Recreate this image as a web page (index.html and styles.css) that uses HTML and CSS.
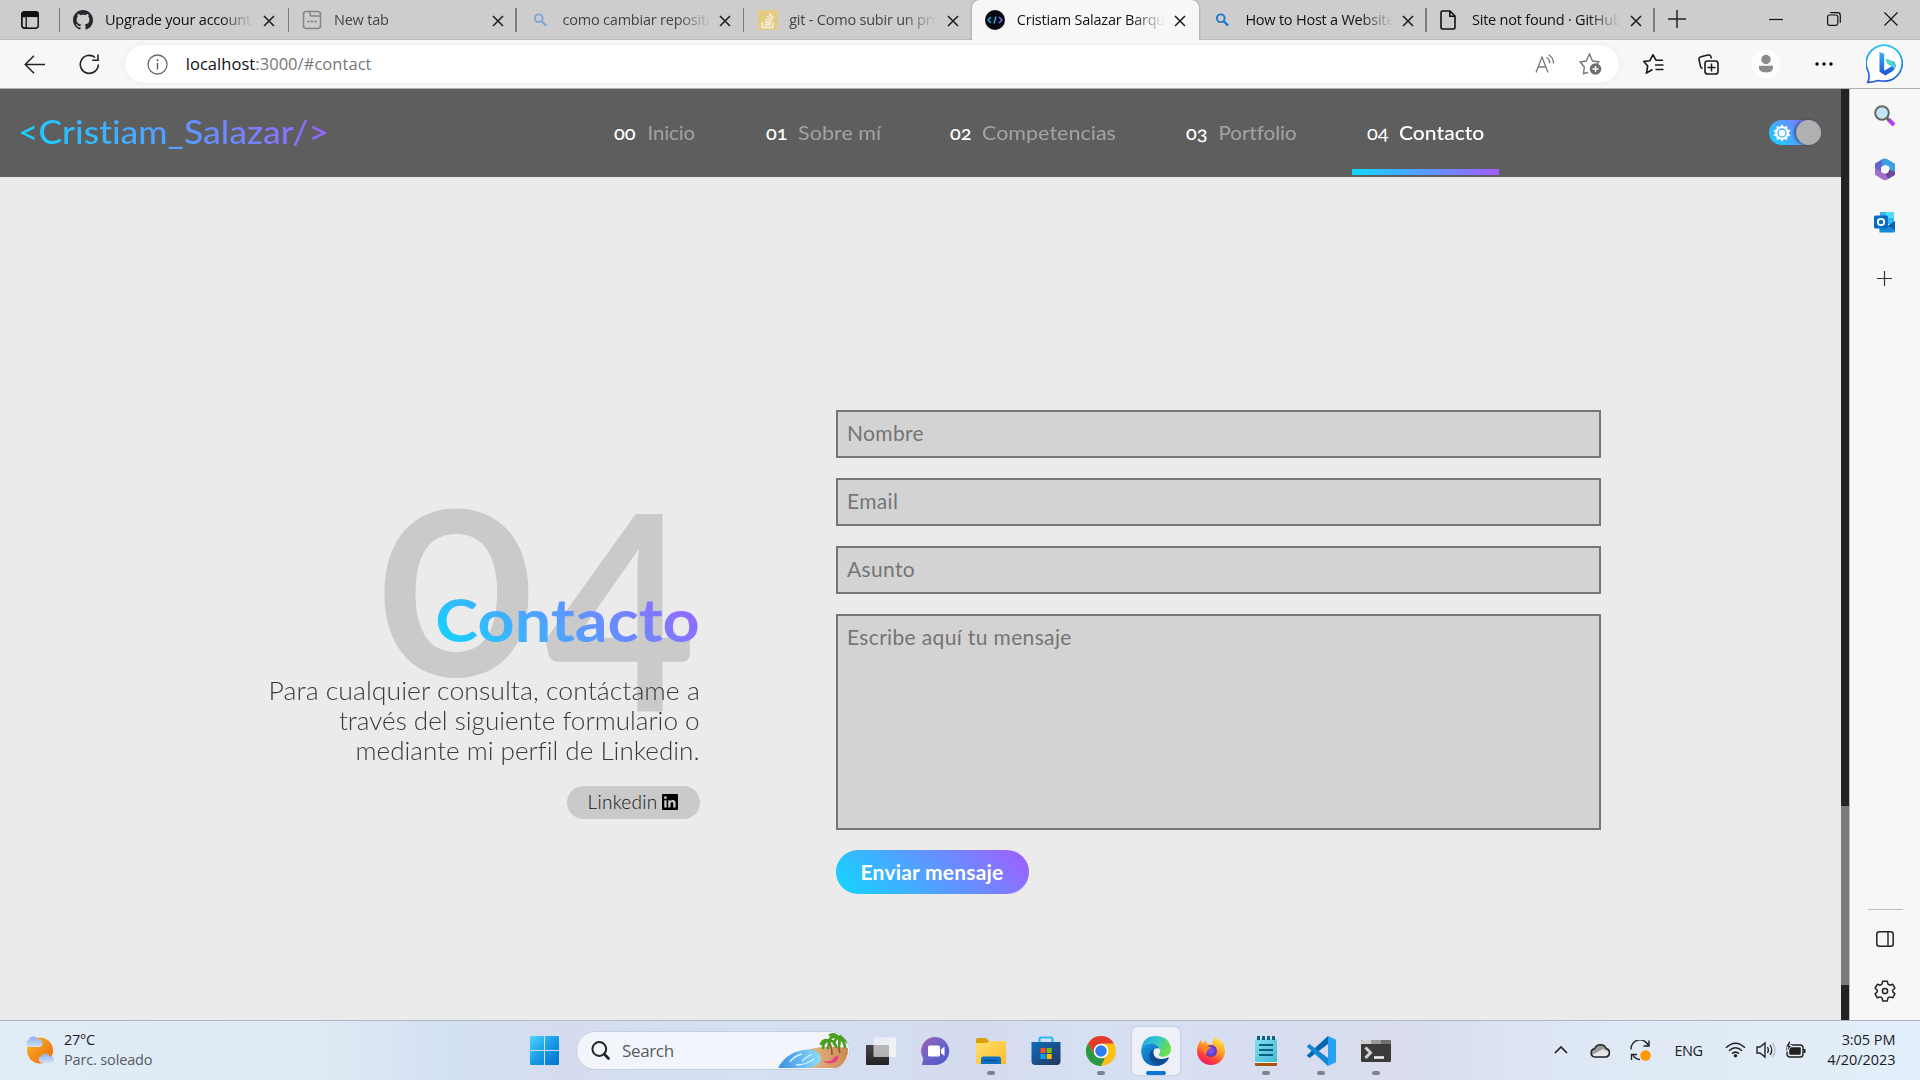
FILE: index.html
```html
<!DOCTYPE html>
<html lang="es">
<head>
<meta charset="utf-8">
<title>Cristiam Salazar Barquero</title>
<link rel="stylesheet" href="styles.css">
</head>
<body>
<svg class="defs" width="0" height="0" aria-hidden="true">
  <defs>
    <linearGradient id="gWin" x1="0" y1="0" x2="1" y2="1"><stop offset="0" stop-color="#4fd5ff"/><stop offset=".5" stop-color="#1a9be6"/><stop offset="1" stop-color="#0070cf"/></linearGradient>
    <linearGradient id="gSun" x1="0" y1="0" x2="1" y2="1"><stop offset="0" stop-color="#f7bb2c"/><stop offset="1" stop-color="#f0640c"/></linearGradient>
    <linearGradient id="gCloud" x1="0" y1="0" x2="0" y2="1"><stop offset="0" stop-color="#8fb0ea"/><stop offset="1" stop-color="#cfe0fa"/></linearGradient>
    <linearGradient id="gBing" x1="0" y1="0" x2="0" y2="1"><stop offset="0" stop-color="#20c4f4"/><stop offset="1" stop-color="#2557d6"/></linearGradient>
    <linearGradient id="gBingB" x1="0" y1="0" x2="0" y2="1"><stop offset="0" stop-color="#36b4f5"/><stop offset="1" stop-color="#1d4fd8"/></linearGradient>
    <linearGradient id="gChat" x1="0" y1="0" x2="1" y2="1"><stop offset="0" stop-color="#a45fb0"/><stop offset=".5" stop-color="#6b63c9"/><stop offset="1" stop-color="#4a55c8"/></linearGradient>
    <linearGradient id="gFolder" x1="0" y1="0" x2="1" y2="1"><stop offset="0" stop-color="#ffdf6e"/><stop offset="1" stop-color="#f9bd2a"/></linearGradient>
    <linearGradient id="gStore" x1="0" y1="0" x2="1" y2="1"><stop offset="0" stop-color="#0f6cbf"/><stop offset="1" stop-color="#26365c"/></linearGradient>
    <linearGradient id="gEdgeTop" x1="0" y1="0" x2="1" y2=".4"><stop offset="0" stop-color="#1fa0e0"/><stop offset=".5" stop-color="#2fc5d0"/><stop offset="1" stop-color="#6be04c"/></linearGradient>
    <linearGradient id="gEdgeLow" x1="0" y1="0" x2="1" y2="1"><stop offset="0" stop-color="#1b9de2"/><stop offset=".5" stop-color="#0c70c0"/><stop offset="1" stop-color="#0d4f98"/></linearGradient>
    <linearGradient id="gFox" x1=".8" y1="0" x2=".3" y2="1"><stop offset="0" stop-color="#fff04a"/><stop offset=".45" stop-color="#ff9a26"/><stop offset=".75" stop-color="#ff4038"/><stop offset="1" stop-color="#e8166f"/></linearGradient>
    <radialGradient id="gFoxIn"><stop offset="0" stop-color="#9059ff"/><stop offset="1" stop-color="#5b34b8"/></radialGradient>
    <linearGradient id="gNote" x1="0" y1="0" x2="1" y2="1"><stop offset="0" stop-color="#7fe0ef"/><stop offset="1" stop-color="#46b9d6"/></linearGradient>
    <linearGradient id="gSea" x1="0" y1="0" x2="1" y2="0"><stop offset="0" stop-color="#3c8fe6"/><stop offset="1" stop-color="#8fdcf8"/></linearGradient>
    <linearGradient id="gSand" x1="0" y1="0" x2="1" y2="0"><stop offset="0" stop-color="#f6cda2"/><stop offset="1" stop-color="#c98a55"/></linearGradient>
    <linearGradient id="gView" x1="0" y1="0" x2="0" y2="1"><stop offset="0" stop-color="#444"/><stop offset="1" stop-color="#222"/></linearGradient>
    <symbol id="close" viewBox="0 0 12 12"><path d="M1 1l10 10M11 1L1 11" stroke="#1b1b1b" stroke-width="1.5" fill="none"/></symbol>
    <symbol id="lens" viewBox="0 0 16 16"><circle cx="6" cy="6" r="4.4" fill="none" stroke="currentColor" stroke-width="2.2"/><path d="M9.4 9.4l5 5" stroke="currentColor" stroke-width="2.6"/></symbol>
  </defs>
</svg>

<div class="tabstrip">
  <div class="tab-actions"><svg width="18" height="18" viewBox="0 0 18 18"><rect x=".9" y=".9" width="16.2" height="16.2" rx="2.6" fill="none" stroke="#111" stroke-width="1.7"/><path d="M1 3q0-2 2-2h12q2 0 2 2v2.5H1zM5.2 5v12" fill="#111" stroke="#111" stroke-width="1.3"/><path d="M6 6.300h10.300v9q0 1-1 1H6z" fill="#cdcdcd"/></svg></div>
  <div class="tab loaded first"><svg class="fav" width="20" height="20" viewBox="0 0 16 16"><path fill="#24292f" d="M8 0C3.58 0 0 3.58 0 8c0 3.54 2.29 6.53 5.47 7.59.4.07.55-.17.55-.38 0-.19-.01-.82-.01-1.49-2.01.37-2.53-.49-2.69-.94-.09-.23-.48-.94-.82-1.13-.28-.15-.68-.52-.01-.53.63-.01 1.08.58 1.23.82.72 1.21 1.87.87 2.33.66.07-.52.28-.87.51-1.07-1.78-.2-3.64-.89-3.64-3.95 0-.87.31-1.59.82-2.15-.08-.2-.36-1.02.08-2.12 0 0 .67-.21 2.2.82.64-.18 1.32-.27 2-.27s1.36.09 2 .27c1.53-1.04 2.2-.82 2.2-.82.44 1.1.16 1.92.08 2.12.51.56.82 1.27.82 2.15 0 3.07-1.87 3.75-3.65 3.95.29.25.54.73.54 1.48 0 1.07-.01 1.93-.01 2.2 0 .21.15.46.55.38A8.01 8.01 0 0 0 16 8c0-4.42-3.58-8-8-8z"/></svg><span class="label">Upgrade your account</span><svg class="x"><use href="#close"/></svg></div>
  <div class="tab"><svg class="fav" width="20" height="20" viewBox="0 0 20 20"><g fill="none" stroke="#858585" stroke-width="1.5"><rect x="1.5" y="1.5" width="17" height="17" rx="3"/><path d="M8 2v2.5q0 1.5 1.5 1.5h9"/></g><g fill="#777"><circle cx="6.5" cy="11.5" r="1.1"/><circle cx="10" cy="11.5" r="1.1"/><circle cx="13.5" cy="11.5" r="1.1"/></g></svg><span class="label">New tab</span><svg class="x"><use href="#close"/></svg></div>
  <div class="tab"><svg class="fav pale" width="14" height="14"><use href="#lens"/></svg><span class="label">como cambiar repositorio</span><svg class="x"><use href="#close"/></svg></div>
  <div class="tab no-line"><svg class="fav git" width="20" height="20" viewBox="0 0 20 20"><rect width="20" height="20" fill="#e3cb84"/><path d="M4 12.500v5h11v-5M6.200 15h6.500M6.500 12.300l6.400 1M7.300 9.200l6 2.400M9 6.200l5.200 4M11.500 3.500l3.700 5.200" fill="none" stroke="#f8f4e8" stroke-width="1.4"/></svg><span class="label">git - Como subir un proyecto</span><svg class="x"><use href="#close"/></svg></div>
  <div class="tab active"><svg class="fav" width="20" height="20" viewBox="0 0 20 20"><circle cx="10" cy="10" r="10" fill="#070912"/><path d="M6 7l-3 3 3 3M11 6.500l-2 7" fill="none" stroke="#24b5e8" stroke-width="1.400"/><path d="M14 7l3 3-3 3" fill="none" stroke="#8f6bf5" stroke-width="1.4"/></svg><span class="label">Cristiam Salazar Barquero</span><svg class="x"><use href="#close"/></svg></div>
  <div class="tab loaded"><svg class="fav blue" width="14" height="14"><use href="#lens"/></svg><span class="label">How to Host a Website</span><svg class="x"><use href="#close"/></svg></div>
  <div class="tab loaded last"><svg class="fav" width="16" height="20" viewBox="0 0 16 20"><path d="M1 2.500Q1 1 2.500 1H10l5 5v11.500q0 1.500-1.500 1.500h-11Q1 19 1 17.500zM9.800 1v5.200H15" fill="none" stroke="#111" stroke-width="1.600"/></svg><span class="label">Site not found · GitHub Pages</span><svg class="x"><use href="#close"/></svg></div>
  <div class="new-tab"><svg width="18" height="18"><path d="M9 0v18M0 9h18" stroke="#222" stroke-width="1.500"/></svg></div>
  <div class="win-controls">
    <svg width="14" height="14"><path d="M0 7.500h14" stroke="#111" stroke-width="1.200"/></svg>
    <svg width="14" height="14" viewBox="0 0 14 14"><g fill="none" stroke="#111" stroke-width="1.200"><rect x=".6" y="3" width="10.200" height="10.400" rx="1.800"/><path d="M3.200.7h7.300q2.800 0 2.800 2.800v7.300"/></g></svg>
    <svg width="14" height="14"><path d="M.5.5l13 13M13.500.5l-13 13" stroke="#111" stroke-width="1.200"/></svg>
  </div>
</div>

<div class="toolbar">
  <div class="tool back"><svg width="21" height="19" viewBox="0 0 21 19"><path d="M10 .7L1.200 9.500l8.800 8.800M1.500 9.500H21" fill="none" stroke="#222" stroke-width="1.500"/></svg></div>
  <div class="tool"><svg width="21" height="21" viewBox="0 0 21 21"><path d="M19.300 10.500a9 9 0 1 1-3.200-7M19 .5v5.800h-5.800" fill="none" stroke="#222" stroke-width="1.600"/></svg></div>
  <div class="address">
    <svg width="21" height="21" viewBox="0 0 21 21"><circle cx="10.500" cy="10.500" r="9.500" fill="none" stroke="#6b6b6b" stroke-width="1.300"/><path d="M10.500 9v6.500" stroke="#555" stroke-width="1.300"/><circle cx="10.500" cy="6.200" r="1" fill="#555"/></svg>
    <span class="url"><b>localhost</b>:3000/#contact</span>
    <svg class="aloud" width="20" height="20" viewBox="0 0 20 20"><path d="M1 18.500L7 3l6 15.500M3.200 13h7.600M11.500 3.200q3.300 2 3.300 6M13.500.8q5 2.700 5 8.700" fill="none" stroke="#777" stroke-width="1.300"/></svg>
    <svg width="24" height="22" viewBox="0 0 24 22"><path d="M9 19.500l-4.500 1 .8-6.500L1.200 9l6-1L10.500 1l3 7 6.200.8-1.400 2" fill="none" stroke="#777" stroke-width="1.400"/><circle cx="16.500" cy="16" r="5.800" fill="#6e6e6e"/><path d="M16.500 13v6M13.500 16h6" stroke="#fff" stroke-width="1.400"/></svg>
  </div>
  <div class="tool t1"><svg width="21" height="20" viewBox="0 0 21 20"><path d="M9.500 15.500l-6 3.500 1.200-7L.8 7.500l6-.8L10 .8l3 5.400h7M12 11h8.500M12.500 15.500h8" fill="none" stroke="#1a1a1a" stroke-width="1.600"/></svg></div>
  <div class="tool t2"><svg width="21" height="21" viewBox="0 0 21 21"><path d="M4.500 14.500Q2.800 14 2.400 12L1 5.500Q.7 3.300 3 2.700L10 1q2.500-.4 3 1.800l.4 1.700" fill="none" stroke="#1a1a1a" stroke-width="1.500"/><rect x="7" y="7" width="13" height="13" rx="2.600" fill="none" stroke="#1a1a1a" stroke-width="1.600"/><path d="M13.500 9.500v8M9.500 13.500h8" stroke="#1a1a1a" stroke-width="1.500"/></svg></div>
  <div class="tool t3"><svg width="30" height="30" viewBox="0 0 30 30"><circle cx="15" cy="15" r="14.500" fill="#fdfdfd"/><circle cx="15" cy="10.500" r="4.700" fill="#8b8b8b"/><path d="M8 16.800h14q1 6.700-7 6.700t-7-6.700z" fill="#8b8b8b"/></svg></div>
  <div class="tool t4"><svg width="18" height="4"><circle cx="2" cy="2" r="1.700"/><circle cx="9" cy="2" r="1.700"/><circle cx="16" cy="2" r="1.700"/></svg></div>
  <div class="tool bing"><svg width="40" height="40" viewBox="0 0 40 40"><path d="M1.800 38.300Q4.200 33 2.200 27.500A18 18 0 1 1 20 37.200q-5 0-8-.7-4 1.600-10.200 1.800z" fill="#fff" stroke="url(#gBing)" stroke-width="1.700"/><path d="M13.500 8l4.700 1.800v17L26 22l-4.200-2-2.200-5.200 9 3.200q3 6-2.200 9.200l-7 4.300-5.900-3.700z" fill="url(#gBingB)"/><path d="M19.600 14.800l6.300 2.200q3.300 1.600 3.300 5.200 0 2.200-1.200 3.500 0-3.200-6.200-5.700z" fill="#42dbd0"/></svg></div>
</div>

<div class="workspace">
  <div class="page">
    <header class="site-header">
      <a class="logo"><span>&lt;Cristiam_Salazar/&gt;</span></a>
      <nav>
        <a><i>00</i><span class="n1">Inicio</span></a>
        <a><i>01</i><span class="n2">Sobre mí</span></a>
        <a><i>02</i><span class="n3">Competencias</span></a>
        <a><i>03</i><span class="n4">Portfolio</span></a>
        <a class="current"><i>04</i><span class="n5">Contacto</span></a>
      </nav>
      <div class="switch"><svg width="18" height="18" viewBox="0 0 18 18"><path fill="#fff" d="M9 .3l2 2.700 3.200-1.100.1 3.400 3.200 1.100L15.600 9l1.900 2.600-3.200 1.100-.1 3.400L11 15l-2 2.700L7 15l-3.200 1.100-.1-3.400L.5 11.600 2.400 9 .5 6.400l3.200-1.100.1-3.400L7 3z"/><circle cx="9" cy="9" r="4" fill="none" stroke="#45b0fb" stroke-width="1.300"/></svg><span class="knob"></span></div>
    </header>
    <main class="contact">
      <section class="intro">
        <div class="title"><span class="number">0<span>4</span></span><h1>Contacto</h1></div>
        <p><span class="l1">Para cualquier consulta, contáctame a</span><span class="l2">través del siguiente formulario o</span><span class="l3">mediante mi perfil de Linkedin.</span></p>
        <a class="pill">Linkedin<svg width="16" height="16" viewBox="0 0 16 16"><rect width="16" height="16" rx="1" fill="#000"/><path d="M2.300 6.200h2.300v7.400H2.300zM6.200 6.200h2.200v1q.8-1.200 2.300-1.200 2.900 0 2.900 3.300v4.300h-2.300V9.800q0-1.800-1.300-1.800-1.500 0-1.500 1.900v3.700H6.200z" fill="#ccc"/><circle cx="3.450" cy="3.700" r="1.350" fill="#ccc"/></svg></a>
      </section>
      <form>
        <input type="text" placeholder="Nombre">
        <input type="text" placeholder="Email">
        <input type="text" placeholder="Asunto">
        <textarea placeholder="Escribe aquí tu mensaje"></textarea>
        <button type="button">Enviar mensaje</button>
      </form>
    </main>
  </div>
  <div class="scroll"><div class="thumb"></div></div>
  <aside class="sidebar">
    <div class="s1"><svg width="22" height="22" viewBox="0 0 22 22"><path d="M14.500 14.500l5.500 5.500" stroke="#b93cf0" stroke-width="4"/><path d="M12 12l3 3.200" stroke="#666" stroke-width="3"/><circle cx="8" cy="8" r="6.800" fill="#c4e6fa" stroke="#666" stroke-width="2"/></svg></div>
    <div class="s2"><svg width="22" height="23" viewBox="0 0 22 23"><path d="M8.500 1L1 5.500v11l6 3.500V9.500L13 6z" fill="#5f66cc"/><path d="M8.500 1q2.500-1.300 5 .2L21 5.800v9l-5.500-3V8.700L11 6.500l-3 2z" fill="#3d9fe6"/><path d="M1 10v6.500l7.500 5q2.500 1.500 5 0L21 16.800v-3l-7 3-7-3z" fill="#a26fcb"/><path d="M15.500 11.500l5.500 2.300v3l-6.500 4-3.500-4.500z" fill="#6e4a98"/><circle cx="11" cy="11.500" r="4" fill="#f7f7f7"/></svg></div>
    <div class="s3"><svg width="22" height="22" viewBox="0 0 22 22"><path d="M6 1h14v12H6z" fill="#35b5f0"/><path d="M12 1h8v6h-8z" fill="#52dafa"/><path d="M5 11l8 4 8-5v10q0 1.500-1.500 1.500h-14z" fill="#1689dc"/><path d="M14 15l7-5v9z" fill="#0d5fb0"/><rect x="0" y="4.500" width="14" height="13" rx="1.500" fill="#0b6cc6"/><circle cx="7" cy="11" r="3.200" fill="none" stroke="#fff" stroke-width="1.800"/></svg></div>
    <div class="s4"><svg width="15" height="15"><path d="M7.500 0v15M0 7.500h15" stroke="#333" stroke-width="1.200"/></svg></div>
    <hr>
    <div class="s5"><svg width="18" height="16" viewBox="0 0 18 16"><rect x=".8" y=".8" width="16.400" height="14.400" rx="2.500" fill="none" stroke="#222" stroke-width="1.500"/><path d="M12 1v14" stroke="#222" stroke-width="1.400"/></svg></div>
    <div class="s6"><svg width="22" height="22" viewBox="0 0 22 22"><path d="M8.700 1.200h4.600l.7 3 1.700 1 3-.9 2.200 3.900-2.200 2.100v1.500l2.200 2.100-2.200 3.900-3-.9-1.700 1-.7 3H8.700l-.7-3-1.700-1-3 .9-2.200-3.900 2.200-2.100v-1.500L1.100 8.200l2.200-3.900 3 .9 1.700-1z" fill="none" stroke="#222" stroke-width="1.500" stroke-linejoin="round"/><circle cx="11" cy="11" r="2.600" fill="none" stroke="#222" stroke-width="1.500"/></svg></div>
  </aside>
</div>

<footer class="taskbar">
  <div class="weather">
    <svg width="32" height="32" viewBox="0 0 32 32"><circle cx="16" cy="16.500" r="13" fill="url(#gSun)"/><path d="M4.500 13a4 4 0 0 1 .2-7.200 5 5 0 0 1 9.200-.3 3.800 3.800 0 0 1 1.600 7.500z" fill="url(#gCloud)"/><path d="M17 28.700a3.500 3.500 0 0 1 .3-6.700 4.800 4.800 0 0 1 8.600.3 3.300 3.300 0 0 1 1.600 6.400z" fill="url(#gCloud)"/></svg>
    <div><span class="temp">27°C</span><span class="sky">Parc. soleado</span></div>
  </div>
  <div class="app start"><svg width="29" height="29" viewBox="0 0 29 29"><path d="M0 1q0-1 1-1h13v14H0zM15 0h13q1 0 1 1v13H15zM0 15h14v14H1q-1 0-1-1zM15 15h14v13q0 1-1 1H15z" fill="url(#gWin)"/></svg></div>
  <div class="search">
    <svg width="19" height="19" viewBox="0 0 19 19"><circle cx="8.300" cy="8" r="6.900" fill="none" stroke="#222" stroke-width="2"/><path d="M13.200 13l4.300 4.500" stroke="#222" stroke-width="2.600" stroke-linecap="round"/></svg>
    <span>Search</span>
    <svg class="beach" width="71" height="36" viewBox="0 0 71 36"><path d="M32 17q18-4 38-1 1 12-10 20H10z" fill="url(#gSand)"/><path d="M0 36Q10 17 34 17.500q9 3 9 10-1 6-12 8.500z" fill="url(#gSea)"/><path d="M12 30q4-6 12-8M24 29q6-5 10-7M18 33q10 0 18-6" fill="none" stroke="#d8f3fd" stroke-width="1.300"/><path d="M44 29.500l9-.5 4-4.500 4-.5-3 6-6 1.500z" fill="#ec3d83"/><path d="M51 9q3 6 3 14M61 7q-1 8 1 14" fill="none" stroke="#8c5a2c" stroke-width="1.600"/><path d="M51 9q-5-3-8 3M51 9q-6 0-6 7M51 9q0 4-1 7M51 9q6-1 7 6M51 9q2-5 6-4M61 6q-4-5-9-3M61 6q-4 0-5 6M61 6q5-1 8 4M61 6q5 2 6 9M61 6q1 4 0 8M61 6q2-4 6-3" fill="none" stroke="#4a9f22" stroke-width="2.700" stroke-linecap="round"/></svg>
  </div>
  <div class="apps">
    <div class="app"><svg width="30" height="30" viewBox="0 0 30 30"><rect y="9" width="23" height="20" rx="1" fill="url(#gView)"/><rect x="7.500" y="1.500" width="22.500" height="19.500" rx="1" fill="#f7f7f7" fill-opacity=".65"/><path d="M23 2h7v19h-7z" fill="#f4f4f4" opacity=".7"/></svg></div>
    <div class="app"><svg width="30" height="30" viewBox="0 0 30 30"><path d="M1 28.500l1.300-6A14 14 0 1 1 15 29H1z" fill="url(#gChat)"/><rect x="7" y="9.500" width="12" height="11" rx="1.500" fill="#fff"/><path d="M20 13.500l3.500-3v9.500l-3.500-3z" fill="#fff"/></svg></div>
    <div class="app open"><svg width="30" height="30" viewBox="0 0 30 30"><path d="M0 4q0-2 2-2h8l3 3v4H0z" fill="#dda006"/><path d="M0 7h11l2-2h15q2 0 2 2v21H0z" fill="url(#gFolder)"/><path d="M5 28v-5q0-2.500 2.500-2.500h15q2.500 0 2.500 2.500v5z" fill="#0f6fc0"/><path d="M8.500 24.500h13" stroke="#0a4a88" stroke-width="1.200"/></svg></div>
    <div class="app"><svg width="30" height="30" viewBox="0 0 30 30"><path d="M8.500 7V3q0-1.500 1.500-1.500h10q1.500 0 1.500 1.500v4" fill="none" stroke="#2bb9f2" stroke-width="2.200"/><path d="M.5 6h29v19q0 4-4 4h-21q-4 0-4-4z" fill="url(#gStore)"/><path d="M9.500 12h5v5h-5z" fill="#f35325"/><path d="M15.700 12h5v5h-5z" fill="#81bc06"/><path d="M9.500 18h5v5h-5z" fill="#05a6f0"/><path d="M15.700 18h5v5h-5z" fill="#ffba08"/></svg></div>
    <div class="app open"><svg width="30" height="30" viewBox="0 0 30 30"><circle cx="15" cy="15" r="15" fill="#fcc016"/><path d="M2 7.500A15 15 0 0 1 28 7.500H15L8.500 18.700z" fill="#e33b2e"/><path d="M2 7.500l6.500 11.200L15 22.500l4-.8L15 30A15 15 0 0 1 2 7.500z" fill="#299847"/><circle cx="15" cy="15" r="7.300" fill="#fff"/><circle cx="15" cy="15" r="5.800" fill="#2f7cee"/></svg></div>
    <div class="app open focused"><svg width="30" height="30" viewBox="0 0 30 30"><path d="M.3 13Q2 0 15 0q12 0 15 11 .8 8-6 9.500-5.500.7-6.500-1.500 2-2 1.500-5Q17.500 9 11 9 4 9 .3 15z" fill="url(#gEdgeTop)"/><path d="M.1 15Q2 8 10 8q6 0 8.500 4.500Q13 11 12 16q0 8 8 9 4 .3 7.500-2Q23 30 15 30 1 29.500.1 15z" fill="url(#gEdgeLow)"/><path d="M12.500 13q-1.500 9 6.500 10 5 .5 8.500-1.700.5 1-.3 2Q23 29 17 29.500 8.500 27 8.500 20q0-5 4-7z" fill="#0e4d93"/></svg></div>
    <div class="app"><svg width="30" height="30" viewBox="0 0 30 30"><path d="M1 15Q1 9 5 4l1.500 4L9 4.500q1 3 4 3.500l2 1q2-1 1.500-4Q18 2 20 .5q1 3 4 5L25 4q4 5 4 11a14 14 0 0 1-28 0z" fill="url(#gFox)"/><circle cx="15" cy="15" r="6" fill="url(#gFoxIn)"/><path d="M6 11q6-2 10 1-3 0-4 2-2 1-1 4-4-1-5-7z" fill="#ff8a24"/></svg></div>
    <div class="app open"><svg width="30" height="30" viewBox="0 0 30 30"><path d="M4 25h22v4q0 1-1 1H5q-1 0-1-1z" fill="#a85510"/><path d="M4 26.300h22" stroke="#fff" stroke-width="1.200"/><path d="M4 4.500q0-1.500 1.500-1.500h19Q26 3 26 4.500V26H4z" fill="url(#gNote)"/><path d="M8 9h14M8 14h14M8 19h14" stroke="#0c627c" stroke-width="2"/><path d="M7.500 0v4M12.500 0v4M17.500 0v4M22.500 0v4" stroke="#0c627c" stroke-width="3"/></svg></div>
    <div class="app open"><svg width="30" height="30" viewBox="0 0 30 30"><path d="M.7 19.500L22 0v8L3.500 22z" fill="#0067b0"/><path d="M.7 10.500L3.500 8 22 22v8z" fill="#1286d0"/><path d="M22 0l8 3.700v22.600L22 30z" fill="#27a2f2"/></svg></div>
    <div class="app open"><svg width="30" height="30" viewBox="0 0 30 30"><rect y="4" width="30" height="22" rx="1.500" fill="#3b3b3b"/><path d="M0 8V5.500Q0 4 1.500 4H10v4z" fill="#d0d0d0"/><path d="M10 4h10v4H10z" fill="#9c9c9c"/><path d="M20 4h8.500Q30 4 30 5.500V8H20z" fill="#6e6e6e"/><path d="M4.500 11.500l5 5.200-5 5.200" fill="none" stroke="#d0d0d0" stroke-width="3"/><path d="M13 21.500h10" stroke="#eee" stroke-width="2.600"/></svg></div>
  </div>
  <div class="tray">
    <div><svg width="14" height="8"><path d="M1 7l6-6 6 6" fill="none" stroke="#222" stroke-width="1.700"/></svg></div>
    <div><svg width="21" height="15" viewBox="0 0 21 15"><path d="M4.800 14a4.200 4.200 0 0 1-.2-8.300A6.300 6.300 0 0 1 16.300 5.500 4.400 4.400 0 0 1 16 14z" fill="#9a9a9a"/><path d="M2 12l11-6 6 3q2 5-3 5H4.800z" fill="#e6e6e6"/><path d="M4.800 14a4.200 4.200 0 0 1-.2-8.300A6.300 6.300 0 0 1 16.300 5.500 4.400 4.400 0 0 1 16 14z" fill="none" stroke="#222" stroke-width="1.500"/></svg></div>
    <div><svg width="21" height="21" viewBox="0 0 21 21"><path d="M1 9.500A9 9 0 0 1 18.500 6M19 .5V6h-5.500M10 19.500q-5 0-7.500-5.200M1.500 20v-5.500H7" fill="none" stroke="#222" stroke-width="1.400"/><circle cx="15.500" cy="15.500" r="5.200" fill="#ff9800"/></svg></div>
    <div class="lang">ENG</div>
    <div class="sm"><svg width="21" height="16" viewBox="0 0 21 16"><path d="M1 5.800q9.500-9 19 0M4 8.800q6.500-6 13 0M7 11.600q3.500-3 7 0" fill="none" stroke="#222" stroke-width="1.500"/><circle cx="10.500" cy="13.800" r="1.700" fill="#222"/></svg></div>
    <div class="sm"><svg width="20" height="18" viewBox="0 0 20 18"><path d="M1 6h3l5-4v14l-5-4H1z" fill="none" stroke="#222" stroke-width="1.400"/><path d="M11.500 6q1.800 3 0 6M14 4q3.500 5 0 10" fill="none" stroke="#222" stroke-width="1.300"/><path d="M16.500 2q5 7 0 14" fill="none" stroke="#b5bcc5" stroke-width="1.300"/></svg></div>
    <div class="sm battery"><svg width="21" height="17" viewBox="0 0 21 17"><rect x="2" y="4" width="16" height="12" rx="2.800" fill="none" stroke="#222" stroke-width="1.400"/><rect x="4.200" y="6.200" width="11.600" height="7.600" rx="1" fill="#222"/><path d="M18.500 8h2v4h-2z" fill="#222"/><path d="M4 0L.5 6H3L1.500 11 7 4.500H4.500L6 0z" fill="#222" stroke="#e0eaf6" stroke-width="1"/></svg></div>
    <div class="clock"><span>3:05 PM</span><span>4/20/2023</span></div>
  </div>
</footer>
</body>
</html>
```
FILE: styles.css
```css
:root {
  --grad: linear-gradient(45deg, #0fd8ff, #a35cff);
  --ui: "Open Sans", "Noto Sans", sans-serif;
  --site: Lato, sans-serif;
}
* { box-sizing: border-box; }
body { margin: 0; width: 1920px; height: 1080px; overflow: hidden; display: flex; flex-direction: column; font-family: var(--ui); }
svg { display: block; flex: none; }
.defs { position: absolute; }

/* Tab strip */
.tabstrip { flex: none; height: 40px; display: flex; background: #cdcdcd; border-bottom: 1px solid #bdbdbd; }
.tab-actions { width: 60px; padding: 11px 0 0 21px; position: relative; }
.tab { width: 227.6px; height: 40px; display: flex; align-items: center; padding: 0 13px; position: relative; font-size: 14.5px; letter-spacing: -.22px; color: #444; }
.first { width: 229px; }
.tab-actions::after, .tab:not(.no-line):not(.active)::after { content: ""; position: absolute; right: 0; top: 8px; width: 1.5px; height: 24px; background: #7b7b7b; }
.fav { margin-right: 12px; }
.fav[width="14"] { width: 15px; margin: 0 15px 0 3px; }
.fav[width="16"] { margin-right: 16px; }
.git { margin: 0 11px 0 1px; }
.pale { color: #79a9d6; }
.blue { color: #1f78cc; }
.label { width: 149px; overflow: hidden; white-space: nowrap; line-height: 24px; -webkit-mask-image: linear-gradient(90deg, #000 115px, transparent 148px); mask-image: linear-gradient(90deg, #000 115px, transparent 148px); }
.x { width: 12px; height: 12px; margin: 2px 0 0 9px; }
.loaded, .active { color: #111; }
.active { background: #f7f7f7; border-radius: 8px 8px 0 0; box-shadow: 0 0 3px rgba(0, 0, 0, .3); clip-path: inset(-4px -4px 0 -4px); }
.new-tab { width: 50px; padding: 10px 0 0 13px; }
.win-controls { display: flex; gap: 43.500px; margin: 12px 22px 0 auto; }

/* Toolbar */
.toolbar { flex: none; height: 49px; display: flex; align-items: center; background: #f7f7f7; border-bottom: 1px solid #b0b0b0; }
.tool { width: 56px; display: flex; justify-content: center; }
.back { width: 55px; margin-left: 7px; }
.address { width: 1498px; height: 38px; margin-left: 7px; padding: 0 15.500px 0 22px; display: flex; align-items: center; border-radius: 19px; background: #fff; box-shadow: 0 0 4px rgba(0, 0, 0, .07); }
.url { margin-left: 18px; font-size: 16.5px; letter-spacing: .05px; color: #777; line-height: 24px; }
.url b { font-weight: 400; color: #111; }
.aloud { margin: 0 24px 0 auto; }
.t1, .t4 { width: 55px; }
.t1 { margin-left: 7px; }
.t3 { width: 60px; }
.bing { width: 69px; margin-left: auto; }

/* Workspace */
.workspace { flex: none; height: 931px; display: flex; }
.page { width: 1841px; background: #ebebeb; font-family: var(--site); font-variant-ligatures: none; display: flex; flex-direction: column; }
.scroll { width: 9px; padding-top: 717px; background: #232323; border-right: 1px solid #bbb; }
.thumb { height: 179px; background: #7b7b7b; }

.site-header { height: 88px; display: flex; align-items: center; background: #5e5e5e; color: #fff; }
.logo { width: 599px; padding: 0 0 3px 18px; font-size: 32px; font-weight: 500; }
.logo span { display: inline-block; transform: scaleX(1.108); transform-origin: left; background: linear-gradient(45deg, #0fd8ff, #a35cff); -webkit-background-clip: text; background-clip: text; color: transparent; }
nav { display: grid; grid-template-columns: 112px 144px 196px 141px 147px; column-gap: 40px; height: 88px; font-size: 20px; }
nav a { display: flex; align-items: center; padding: 0 0 2px 15px; white-space: nowrap; color: #a3a3a3; }
nav i { width: 31.500px; font-style: normal; font-weight: 500; color: #fff; font-feature-settings: "onum"; }
nav span { transform-origin: left; }
.n1 { transform: translateX(1.500px) scaleX(1.010); }
.n2 { transform: scaleX(1.080); }
.n3 { transform: scaleX(1.076); }
.n4 { transform: translateX(.5px) scaleX(1.025); }
.n5 { transform: scaleX(1.055); font-weight: 500; }
.current { color: #fff; position: relative; }
.current i { font-weight: 400; }
.current::after { content: ""; position: absolute; left: 0; right: 0; bottom: 2px; height: 6px; background: linear-gradient(90deg, #0fd8ff, #a35cff); }
.switch { width: 52px; height: 25px; margin: 0 20px 1px auto; padding-left: 4px; display: flex; align-items: center; justify-content: space-between; border-radius: 13px; background: var(--grad); }
.knob { width: 25px; height: 25px; border-radius: 50%; background: #b0b0b0; box-shadow: -2px 0 3px rgba(30, 30, 60, .55); }

.contact { flex: 1; display: flex; padding: 233px 240px 0; justify-content: space-between; }
.intro { width: 459.500px; padding-top: 173px; display: flex; flex-direction: column; align-items: flex-end; text-align: right; }
.title { width: 100%; position: relative; }
.number { position: absolute; left: 137px; top: -167px; font-size: 294px; line-height: 294px; font-weight: 600; letter-spacing: 8px; color: #cacaca; font-feature-settings: "onum"; white-space: nowrap; }
.number span { display: inline-block; transform: translate(1px, 4px) scale(.945, 1.01); transform-origin: 0 50%; }
h1 { width: fit-content; position: relative; margin: 0 0 0 auto; font-size: 60px; line-height: 72px; font-weight: 700; transform: translateX(.5px) scaleX(1.078); transform-origin: right; background: var(--grad); -webkit-background-clip: text; background-clip: text; color: transparent; }
.intro p { position: relative; display: flex; flex-direction: column; align-items: flex-end; margin: 20px 0; font-size: 25.600px; line-height: 30.200px; font-weight: 300; color: #3a3a3a; white-space: nowrap; }
.intro p span { transform-origin: right; }
.l1 { transform: scaleX(1.042); }
.l2 { transform: scaleX(1.020); }
.l3 { transform: scaleX(1.019); }
.pill { width: 133px; height: 33px; padding-bottom: 1px; display: flex; align-items: center; justify-content: center; gap: 5px; border-radius: 17px; background: #cacaca; color: #111; font-size: 19px; font-weight: 300; letter-spacing: .25px; }
form { width: 765px; display: flex; flex-direction: column; gap: 20px; }
input, textarea { width: 100%; height: 48px; padding: 0 9px 3px; border: 2px solid #767676; border-radius: 0; background: #d3d3d3; font: 400 21px var(--site); letter-spacing: .35px; resize: none; }
textarea { height: 216px; padding-top: 8px; }
::placeholder { color: #757575; }
button { width: 193px; height: 44px; padding: 0 1px 2px 0; border: 0; border-radius: 22px; background: var(--grad); color: #fff; font: 700 21px var(--site); letter-spacing: .2px; }

/* Edge sidebar */
.sidebar { width: 70px; display: flex; flex-direction: column; background: #f7f7f7; }
.sidebar div { display: flex; align-items: center; justify-content: center; flex: none; padding-right: 1px; }
.s1 { height: 54px; }
.s2 { height: 53px; }
.s3 { height: 51px; }
.s4 { height: 62px; }
.sidebar hr { width: 35px; height: 1px; margin: auto auto 2px; border: 0; background: #bfbfbf; }
.s5 { height: 53px; }
.s6 { height: 55px; padding-bottom: 4px; }

/* Taskbar */
.taskbar { flex: none; height: 60px; display: flex; align-items: center; border-top: 1px solid #aeb5c3; background: linear-gradient(90deg, #e0ecf6 0, #dfe9f4 330px, #d3e0f4 450px, #d6dcf0 560px, #d4e0f4 750px, #d5dbee 980px, #d6e0f3 1080px, #d8dcee 1400px, #dfe9f5 1600px, #e2eef9 1900px); font-size: 14.500px; letter-spacing: -.15px; color: #1c1c1c; }
.weather { width: 517px; display: flex; align-items: center; gap: 8px; padding: 0 0 2px 24px; }
.weather span, .clock span { display: block; line-height: 20px; }
.temp { letter-spacing: -.3px; }
.sky { color: #565b62; }
.app { width: 55px; height: 48px; display: flex; align-items: center; justify-content: center; position: relative; }
.start { padding-bottom: 1px; }
.search { width: 274px; height: 39px; margin: 0 3.500px 0 4px; padding: 0 0 1px 14px; display: flex; align-items: center; border-radius: 20px; overflow: hidden; background: #f2f6fc; border: 1px solid #c6cfe0; font-size: 17px; color: #5a5a5a; }
.search span { margin-left: 12px; letter-spacing: -.35px; }
.beach { margin-left: auto; }
.apps { display: flex; }
.apps .app svg { position: relative; }
.focused { z-index: 0; }
.focused::before { content: ""; position: absolute; inset: 0 3.500px; border-radius: 5px; background: #edf0f9; box-shadow: 0 0 2px rgba(120, 130, 160, .5); }
.open::after { content: ""; position: absolute; bottom: 0; left: 23.500px; width: 8px; height: 4px; border-radius: 2px; background: #7f828c; }
.focused::after { left: 17.500px; width: 20px; background: #0c76d4; }
.tray { flex: 1; display: flex; align-items: center; padding: 0 24.500px 1px 137px; }
.tray div { width: 40px; display: flex; justify-content: center; }
.tray .lang { width: 56px; letter-spacing: -.5px; }
.tray .sm { width: 30px; }
.tray .lang + .sm { margin-left: 4px; }
.tray .battery { padding-bottom: 2px; }
.tray .clock { flex: 1; display: block; text-align: right; letter-spacing: -.05px; }
```
